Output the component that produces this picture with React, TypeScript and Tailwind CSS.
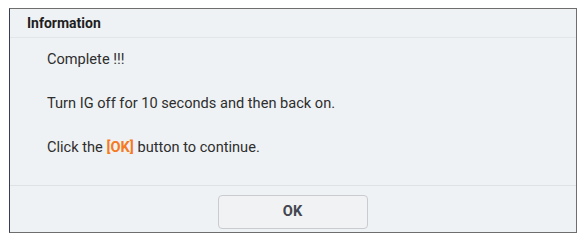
export default function App() {
  return (
    <div className="w-[587px] h-[242px] bg-white pt-[8px] pl-[9px] font-['Roboto',sans-serif]">
      <div className="w-[568px] h-[225px] flex flex-col bg-[#eff2f4] border border-[#6e6e6e] border-l-[#3a3d55]">
        {/* Header */}
        <div className="h-[29px] shrink-0 flex items-center pl-[17px] border-b border-[#e3e6e9] text-[14px] font-bold text-[#1e1e1e]">
          Information
        </div>

        {/* Body */}
        <div className="flex-1 pl-[37px] pt-[11px] text-[14.6px] text-[#2e2e2e] leading-[20px]">
          <p>Complete !!!</p>
          <p className="mt-[24px]">Turn IG off for 10 seconds and then back on.</p>
          <p className="mt-[24px]">
            Click the <span className="font-bold text-[#f57a22]">[OK]</span> button to continue.
          </p>
        </div>

        {/* Footer */}
        <div className="h-[47px] shrink-0 border-t border-[#dfe2e5] flex justify-center pt-[9px]">
          <button className="w-[150px] h-[34px] rounded-[4px] border border-[#c9cbce] bg-[#f0f2f4] text-[14.6px] font-bold text-[#444650] ml-[-1px]">
            OK
          </button>
        </div>
      </div>
    </div>
  );
}
